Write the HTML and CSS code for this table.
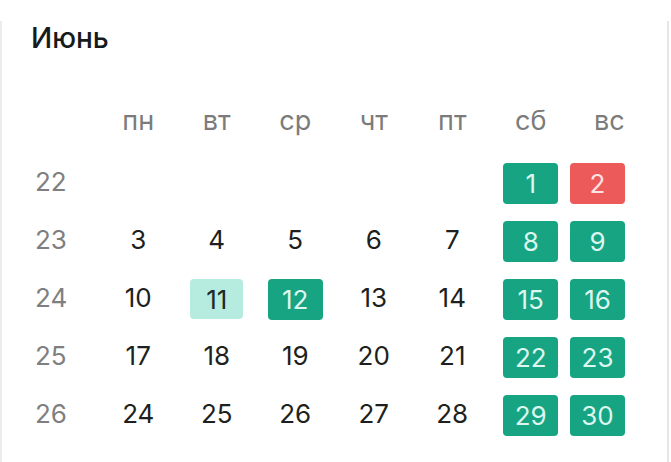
FILE: index.html
```html
<!DOCTYPE html>
<html lang="ru">
<head>
    <meta charset="UTF-8">
    <meta name="viewport" content="width=device-width, initial-scale=1.0">
    <title>Июнь</title>
    <link rel="stylesheet" href="styles.css">
</head>
<body>
    <div class="card">
        <h1 class="month">Июнь</h1>
        <div class="calendar">
            <div class="head"></div>
            <div class="head">пн</div>
            <div class="head">вт</div>
            <div class="head">ср</div>
            <div class="head">чт</div>
            <div class="head">пт</div>
            <div class="head">сб</div>
            <div class="head">вс</div>

            <div class="week">22</div>
            <div class="day"></div>
            <div class="day"></div>
            <div class="day"></div>
            <div class="day"></div>
            <div class="day"></div>
            <div class="day"><span class="box green">1</span></div>
            <div class="day sun"><span class="box red">2</span></div>

            <div class="week">23</div>
            <div class="day">3</div>
            <div class="day">4</div>
            <div class="day">5</div>
            <div class="day">6</div>
            <div class="day">7</div>
            <div class="day"><span class="box green">8</span></div>
            <div class="day sun"><span class="box green">9</span></div>

            <div class="week">24</div>
            <div class="day">10</div>
            <div class="day"><span class="box mint">11</span></div>
            <div class="day"><span class="box green">12</span></div>
            <div class="day">13</div>
            <div class="day">14</div>
            <div class="day"><span class="box green">15</span></div>
            <div class="day sun"><span class="box green">16</span></div>

            <div class="week">25</div>
            <div class="day">17</div>
            <div class="day">18</div>
            <div class="day">19</div>
            <div class="day">20</div>
            <div class="day">21</div>
            <div class="day"><span class="box green">22</span></div>
            <div class="day sun"><span class="box green">23</span></div>

            <div class="week">26</div>
            <div class="day">24</div>
            <div class="day">25</div>
            <div class="day">26</div>
            <div class="day">27</div>
            <div class="day">28</div>
            <div class="day"><span class="box green">29</span></div>
            <div class="day sun"><span class="box green">30</span></div>
        </div>
    </div>
</body>
</html>
```

FILE: styles.css
```css
body, html {
    margin: 0;
    padding: 0;
    background: #fff;
    font-family: Inter, "Noto Sans", sans-serif;
}
.card {
    width: 665px;
    height: 462px;
    border-left: 2px solid #ececec;
    border-right: 2px solid #e6e6e6;
    box-sizing: content-box;
}
.month {
    margin: 21px 0 0 29px;
    font-size: 28px;
    line-height: 34px;
    font-weight: 500;
    color: #161a1c;
}
.calendar {
    display: grid;
    grid-template-columns: 79px repeat(7, 78.5px);
    grid-template-rows: 60px repeat(5, 58px);
    margin-top: 37px;
    padding-left: 18px;
    font-size: 26px;
}
.head {
    display: flex;
    align-items: center;
    justify-content: center;
    padding-bottom: 4px;
    color: #7b7b7b;
    font-size: 27px;
}
.week {
    display: flex;
    align-items: center;
    padding-left: 15px;
    color: #7f7f7f;
}
.day {
    display: flex;
    align-items: center;
    justify-content: center;
    color: #1d1f20;
}
.day.sun {
    justify-content: flex-start;
}
.box {
    display: flex;
    align-items: center;
    justify-content: center;
    width: 55px;
    height: 41px;
    margin-top: 4px;
    border-radius: 4px;
    color: #ddf6ee;
}
.green {
    background: #17a482;
}
.red {
    background: #ec5a5a;
    color: #fde3e3;
}
.mint {
    width: 53px;
    height: 40px;
    background: #b6ece0;
    color: #1d2a27;
}
```
